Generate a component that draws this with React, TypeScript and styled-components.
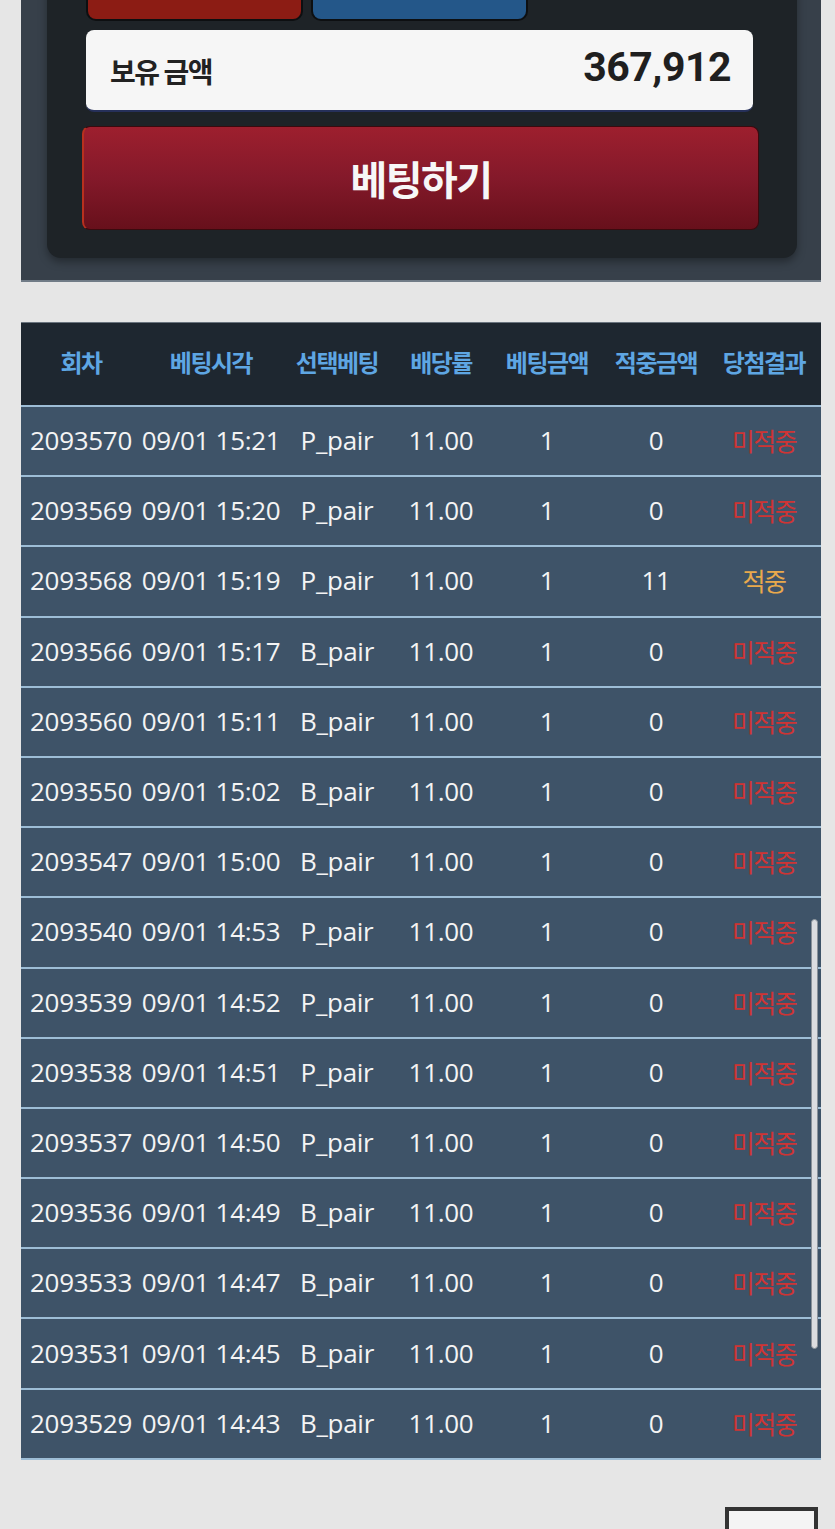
import styled, { createGlobalStyle } from "styled-components";

const GlobalStyle = createGlobalStyle`
  * { box-sizing: border-box; }
  body {
    margin: 0;
    background: #e6e6e6;
    font-family: "Noto Sans", "Noto Sans CJK KR", sans-serif;
    overflow: hidden;
  }
`;

type Bet = {
  round: string;
  time: string;
  pick: string;
  win: number;
};

const bets: Bet[] = [
  { round: "2093570", time: "09/01 15:21", pick: "P_pair", win: 0 },
  { round: "2093569", time: "09/01 15:20", pick: "P_pair", win: 0 },
  { round: "2093568", time: "09/01 15:19", pick: "P_pair", win: 11 },
  { round: "2093566", time: "09/01 15:17", pick: "B_pair", win: 0 },
  { round: "2093560", time: "09/01 15:11", pick: "B_pair", win: 0 },
  { round: "2093550", time: "09/01 15:02", pick: "B_pair", win: 0 },
  { round: "2093547", time: "09/01 15:00", pick: "B_pair", win: 0 },
  { round: "2093540", time: "09/01 14:53", pick: "P_pair", win: 0 },
  { round: "2093539", time: "09/01 14:52", pick: "P_pair", win: 0 },
  { round: "2093538", time: "09/01 14:51", pick: "P_pair", win: 0 },
  { round: "2093537", time: "09/01 14:50", pick: "P_pair", win: 0 },
  { round: "2093536", time: "09/01 14:49", pick: "B_pair", win: 0 },
  { round: "2093533", time: "09/01 14:47", pick: "B_pair", win: 0 },
  { round: "2093531", time: "09/01 14:45", pick: "B_pair", win: 0 },
  { round: "2093529", time: "09/01 14:43", pick: "B_pair", win: 0 },
];

const headers = ["회차", "베팅시각", "선택베팅", "배당률", "베팅금액", "적중금액", "당첨결과"];

function App() {
  return (
    <>
      <GlobalStyle />
      <Page>
        <BetPanel>
          <InnerPanel>
            <ChipRow>
              <ChipButton $color="#8c1c14" />
              <ChipButton $color="#245789" />
            </ChipRow>
            <BalanceBox>
              <BalanceLabel>보유 금액</BalanceLabel>
              <BalanceValue>367,912</BalanceValue>
            </BalanceBox>
            <BetButton type="button">베팅하기</BetButton>
          </InnerPanel>
        </BetPanel>

        <TableWrap>
          <HeaderRow>
            {headers.map((h) => (
              <HeaderCell key={h}>{h}</HeaderCell>
            ))}
          </HeaderRow>
          {bets.map((b) => (
            <Row key={b.round}>
              <Cell>{b.round}</Cell>
              <Cell>{b.time}</Cell>
              <Cell>{b.pick}</Cell>
              <Cell>11.00</Cell>
              <Cell>1</Cell>
              <Cell>{b.win}</Cell>
              <Result $hit={b.win > 0}>{b.win > 0 ? "적중" : "미적중"}</Result>
            </Row>
          ))}
          <ScrollThumb />
        </TableWrap>

        <Footer>
          <PageBox />
        </Footer>
      </Page>
    </>
  );
}

export default App;

const Page = styled.div`
  width: 800px;
  margin-left: 21px;
`;

const BetPanel = styled.div`
  margin-top: -50px;
  background: #37404a;
  border-bottom: 2px solid #717c87;
  padding: 0 24px 22px 26px;
`;

const InnerPanel = styled.div`
  background: #1e2327;
  border-radius: 0 0 14px 14px;
  padding: 0 44px 28px 39px;
  box-shadow: 0 4px 8px rgba(0, 0, 0, 0.35);
  display: flex;
  flex-direction: column;
`;

const ChipRow = styled.div`
  display: flex;
  gap: 8px;
`;

const ChipButton = styled.div<{ $color: string }>`
  width: 217px;
  height: 71px;
  background: ${(p) => p.$color};
  border: 2px solid #0d0f11;
  border-top: none;
  border-radius: 0 0 10px 10px;
`;

const BalanceBox = styled.div`
  margin-top: 9px;
  height: 82px;
  background: #f6f6f6;
  border-radius: 8px;
  border-bottom: 2px solid #26305a;
  display: flex;
  align-items: center;
  justify-content: space-between;
  padding: 0 22px 0 24px;
`;

const BalanceLabel = styled.span`
  font-family: "Noto Sans CJK KR", sans-serif;
  font-size: 28px;
  font-weight: 700;
  color: #222;
  letter-spacing: -1.5px;
  margin-top: 2px;
`;

const BalanceValue = styled.span`
  font-family: Roboto, sans-serif;
  font-size: 41px;
  font-weight: 700;
  color: #1f1f1f;
  letter-spacing: -0.5px;
  margin-bottom: 6px;
`;

const BetButton = styled.button`
  margin: 14px -6px 0 -4px;
  height: 104px;
  border: 1px solid #3a0a0e;
  border-left: 2px solid #b8301e;
  border-radius: 8px;
  background: linear-gradient(180deg, #9d1f2e 0%, #84192a 50%, #67101b 100%);
  color: #f7f7f7;
  font-family: "Noto Sans CJK KR", sans-serif;
  font-size: 40px;
  font-weight: 700;
  letter-spacing: -1.5px;
  cursor: pointer;
`;

const TableWrap = styled.div`
  position: relative;
  margin-top: 40px;
  border-top: 1px solid #6a747e;
  border-bottom: 2px solid #9dbdd6;
`;

const columns = "120px 140px 112px 96px 116px 102px 114px";

const HeaderRow = styled.div`
  display: grid;
  grid-template-columns: ${columns};
  height: 82px;
  background: #1e2730;
  align-items: center;
`;

const HeaderCell = styled.div`
  text-align: center;
  font-family: "Noto Sans CJK KR", sans-serif;
  font-size: 24px;
  font-weight: 700;
  color: #5ea6e3;
  letter-spacing: -1.5px;
  margin-bottom: 6px;
`;

const Row = styled.div`
  display: grid;
  grid-template-columns: ${columns};
  height: 70.2px;
  align-items: center;
  background: #3e5368;
  border-top: 2px solid #9dbdd6;
`;

const Cell = styled.div`
  text-align: center;
  font-family: "Open Sans", sans-serif;
  font-size: 26px;
  color: #f4f4f4;
  white-space: nowrap;
  letter-spacing: -0.3px;
  margin-bottom: 2px;
`;

const Result = styled.div<{ $hit: boolean }>`
  text-align: center;
  font-family: "Noto Sans CJK KR", sans-serif;
  font-size: 25px;
  color: ${(p) => (p.$hit ? "#e9a94c" : "#cf3434")};
  letter-spacing: -1.5px;
  margin-bottom: 2px;
`;

const ScrollThumb = styled.div`
  position: absolute;
  right: 3px;
  top: 596px;
  width: 7px;
  height: 430px;
  border-radius: 4px;
  background: #dcdde0;
  border: 1px solid #8a929a;
`;

const Footer = styled.div`
  display: flex;
  justify-content: flex-end;
  margin-top: 47px;
  padding-right: 3px;
`;

const PageBox = styled.div`
  width: 93px;
  height: 60px;
  border: 4px solid #333;
  background: #f4f4f4;
`;
